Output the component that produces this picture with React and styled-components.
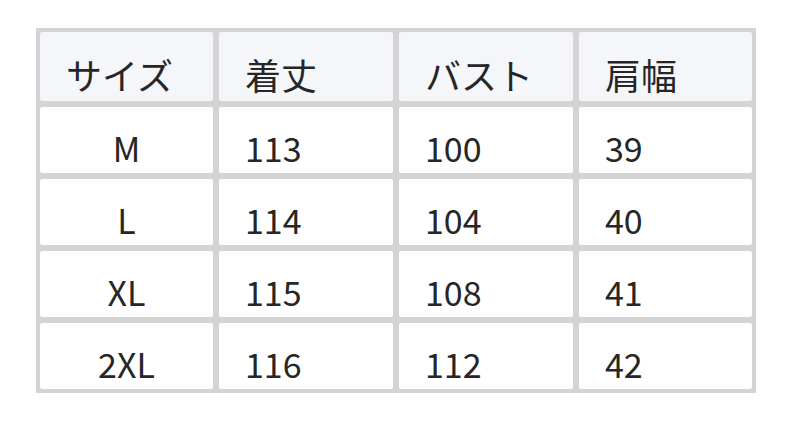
import React from "react";
import styled, { createGlobalStyle } from "styled-components";

const Global = createGlobalStyle`
  html, body { margin: 0; padding: 0; background: #ffffff; }
  body { font-family: "Noto Sans CJK JP", "Noto Sans", sans-serif; }
`;

const Page = styled.div`
  width: 792px;
  height: 422px;
  padding: 28px 0 0 36px;
  box-sizing: border-box;
`;

const Table = styled.div`
  width: 720px;
  box-sizing: border-box;
  display: grid;
  grid-template-columns: 173px 174px 174px 173px;
  grid-template-rows: 69px repeat(4, 66px);
  gap: 6px;
  padding: 4px;
  background: #d4d4d4;
`;

const Cell = styled.div`
  display: flex;
  align-items: flex-end;
  justify-content: ${(p) => (p.$center ? "center" : "flex-start")};
  padding: 0 ${(p) => (p.$center ? "0" : "26px")} 3px ${(p) => (p.$center ? "0" : "26px")};
  background: ${(p) => (p.$head ? "#f5f6fa" : "#ffffff")};
  border-radius: 2px;
  font-size: ${(p) => (p.$head ? "36px" : "34px")};
  line-height: 1;
  color: #262626;
  box-sizing: border-box;
  height: 100%;
  white-space: nowrap;
`;

const CellText = styled.span`
  display: block;
  line-height: 1.3;
`;

const headers = ["サイズ", "着丈", "バスト", "肩幅"];
const rows = [
  ["M", "113", "100", "39"],
  ["L", "114", "104", "40"],
  ["XL", "115", "108", "41"],
  ["2XL", "116", "112", "42"],
];

export default function App() {
  return (
    <>
      <Global />
      <Page>
        <Table>
          {headers.map((h) => (
            <Cell key={h} $head>
              <CellText>{h}</CellText>
            </Cell>
          ))}
          {rows.map((r) =>
            r.map((v, i) => (
              <Cell key={r[0] + i} $center={i === 0}>
                <CellText>{v}</CellText>
              </Cell>
            ))
          )}
        </Table>
      </Page>
    </>
  );
}
